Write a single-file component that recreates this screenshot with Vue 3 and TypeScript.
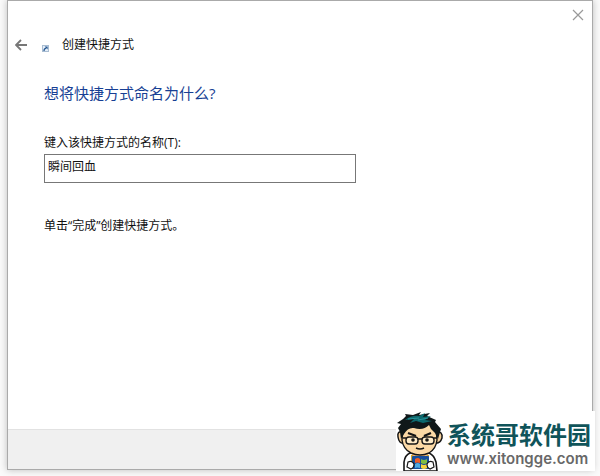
<script setup lang="ts">
import { ref } from 'vue'

const shortcutName = ref<string>('瞬间回血')
</script>

<template>
  <div class="desktop">
    <main class="wizard">
      <div class="titlebar">
        <button class="close" type="button" aria-label="关闭">
          <svg width="12" height="12" viewBox="0 0 12 12" aria-hidden="true">
            <path d="M1 1 11 11M11 1 1 11" fill="none" stroke="#999" stroke-width="1.2" />
          </svg>
        </button>
      </div>
      <header class="heading">
        <button class="back" type="button" aria-label="返回">
          <svg width="12" height="12" viewBox="0 0 12 12" aria-hidden="true">
            <path d="M6 1 1 6 6 11M1 6H12" fill="none" stroke="#777" stroke-width="1.8" />
          </svg>
        </button>
        <svg class="shortcut" width="7" height="7" viewBox="0 0 7 7" aria-hidden="true">
          <rect x=".5" y=".5" width="6" height="6" fill="#e4eef8" stroke="#a9bdd2" />
          <path d="M2 6Q1.8 3.8 4.2 3.2" fill="none" stroke="#24558f" stroke-width="1.2" />
          <path d="M2.6 1.4H5.6V4.6Z" fill="#24558f" />
        </svg>
        <span class="name">创建快捷方式</span>
      </header>
      <form class="content" @submit.prevent>
        <h1>想将快捷方式命名为什么?</h1>
        <label for="shortcut-name">键入该快捷方式的名称(T):</label>
        <input id="shortcut-name" v-model="shortcutName" type="text" />
        <p>单击“完成”创建快捷方式。</p>
      </form>
      <footer class="actions"></footer>
    </main>
    <aside class="brand">
      <svg class="mascot" width="48" height="60" viewBox="0 0 48 60" aria-hidden="true">
        <path d="M14 42Q9 44 8 51L8 60H41L40 51Q38 44 33 42Z" fill="#fff" stroke="#161616" stroke-width="1.6" />
        <path d="M15 41 17 47H31L33 41Z" fill="#e9b06f" />
        <path d="M6 21Q1 20 2 26Q3 33 8 32M40 21Q47 20 46 27Q44 33 39 32" fill="#f8d29c" stroke="#161616" stroke-width="1.5" />
        <path d="M7 17 6 29Q7 38 15 42Q24 46 33 42Q40 38 41 29L40 15Q22 7 7 17Z" fill="#fbd9a6" stroke="#161616" stroke-width="1.4" />
        <path d="M5 28 4 21 2 17 5 13 1 12 7 8 10 5 9 3 17 4 25 1 23 4 34 2 31 5 40 9 39 11 45 18 42 28 39 22 35 18 33 14Q27 20 18 17Q12 16 8 23Z" fill="#101819" />
        <path d="M9 9Q16 4 23 5L29 2 27 6 35 5 29 9 36 10 27 12 20 10 14 12 18 8Z" fill="#0c686d" />
        <path d="M12 8 23 7M22 9 32 7" fill="none" stroke="#279299" stroke-width="1" />
        <path d="M12 22 20 25M35 22 28 25" fill="none" stroke="#151515" stroke-width="2.2" />
        <rect x="10" y="26" width="12" height="7" rx="3" fill="#ffebc7" stroke="#171717" stroke-width="1.4" />
        <rect x="26" y="26" width="12" height="7" rx="3" fill="#ffebc7" stroke="#171717" stroke-width="1.4" />
        <path d="M22 28H26M7 27H10M38 27H41" stroke="#171717" stroke-width="1.4" />
        <circle cx="17" cy="29" r="1.8" fill="#171717" />
        <circle cx="31" cy="29" r="1.8" fill="#171717" />
        <path d="M20 37Q24 39 28 37" fill="none" stroke="#161616" stroke-width="1.4" />
        <path d="M16 44V51M32 44V51" stroke="#d5a62c" stroke-width="2" />
        <rect x="16" y="45" width="17" height="13" rx="1" fill="#174e9c" />
        <path d="M19 48Q22 46 24 48V52Q21 51 19 52Z" fill="#ed5d29" />
        <path d="M25 48Q28 50 31 48V52Q28 54 25 52Z" fill="#81bd40" />
        <path d="M19 53Q22 51 24 53V57Q21 56 19 57Z" fill="#4eaae0" />
        <path d="M25 53Q28 55 31 53V57Q28 59 25 57Z" fill="#f6d23e" />
        <path d="M12 51Q16 49 18 53Q18 57 15 58L11 56ZM37 51Q33 49 31 53Q31 57 34 58L38 56Z" fill="#fff" stroke="#161616" stroke-width="1.2" />
      </svg>
      <div class="brand-text">
        <strong>系统哥软件园</strong>
        <span>www.xitongge.com</span>
      </div>
    </aside>
  </div>
</template>

<style>
body {
  background: #fafafa;
}
</style>

<style scoped>
.desktop {
  position: relative;
  display: flex;
  box-sizing: border-box;
  min-height: 100vh;
  padding: 0 7px 6px;
  font-family: "Open Sans", "Noto Sans CJK SC", sans-serif;
  font-size: 12px;
  line-height: 16px;
  color: #111;
}
.wizard {
  flex: 1;
  display: flex;
  flex-direction: column;
  box-sizing: border-box;
  min-width: 0;
  border: 1px solid #aaa;
  background: #fff;
  box-shadow: 0 0 7px #bbb;
}
button {
  display: flex;
  align-items: center;
  justify-content: center;
  padding: 0;
  border: 0;
  background: none;
}
.titlebar {
  display: flex;
  justify-content: flex-end;
  padding: 4px 4px 0 0;
}
.close {
  width: 20px;
  height: 20px;
}
.heading {
  display: flex;
  align-items: center;
  padding: 12px 7px 0;
}
.back {
  width: 12px;
  height: 16px;
}
.shortcut {
  margin: 6px 13px 0 15px;
}
.content {
  flex: 1;
  padding: 30px 36px;
}
h1 {
  margin: 0;
  font-size: 15px;
  font-weight: 400;
  line-height: 20px;
  color: #173f94;
}
label {
  display: block;
  margin-top: 32px;
}
input {
  display: block;
  box-sizing: border-box;
  width: 61%;
  height: 29px;
  margin: 3px 0 0;
  padding: 0 3px 6px;
  border: 1px solid #777;
  border-radius: 0;
  outline: 0;
  font: inherit;
  color: inherit;
  background: #fff;
}
p {
  margin: 35px 0 0;
}
.actions {
  height: 39px;
  border-top: 1px solid #e2e2e2;
  background: #f0f0f0;
}
.brand {
  position: absolute;
  right: 5px;
  bottom: 5px;
  display: flex;
  height: 60px;
  background: #fff;
}
.mascot {
  flex: none;
}
.brand-text {
  display: flex;
  flex-direction: column;
  padding: 6px 4px 0 3px;
}
.brand-text strong {
  font-family: "Noto Sans CJK SC", sans-serif;
  font-size: 24px;
  font-weight: 700;
  line-height: 34px;
  color: #10545a;
}
.brand-text span {
  font-family: Inter, sans-serif;
  font-size: 15px;
  font-weight: 600;
  line-height: 16px;
  color: #686868;
}
</style>
